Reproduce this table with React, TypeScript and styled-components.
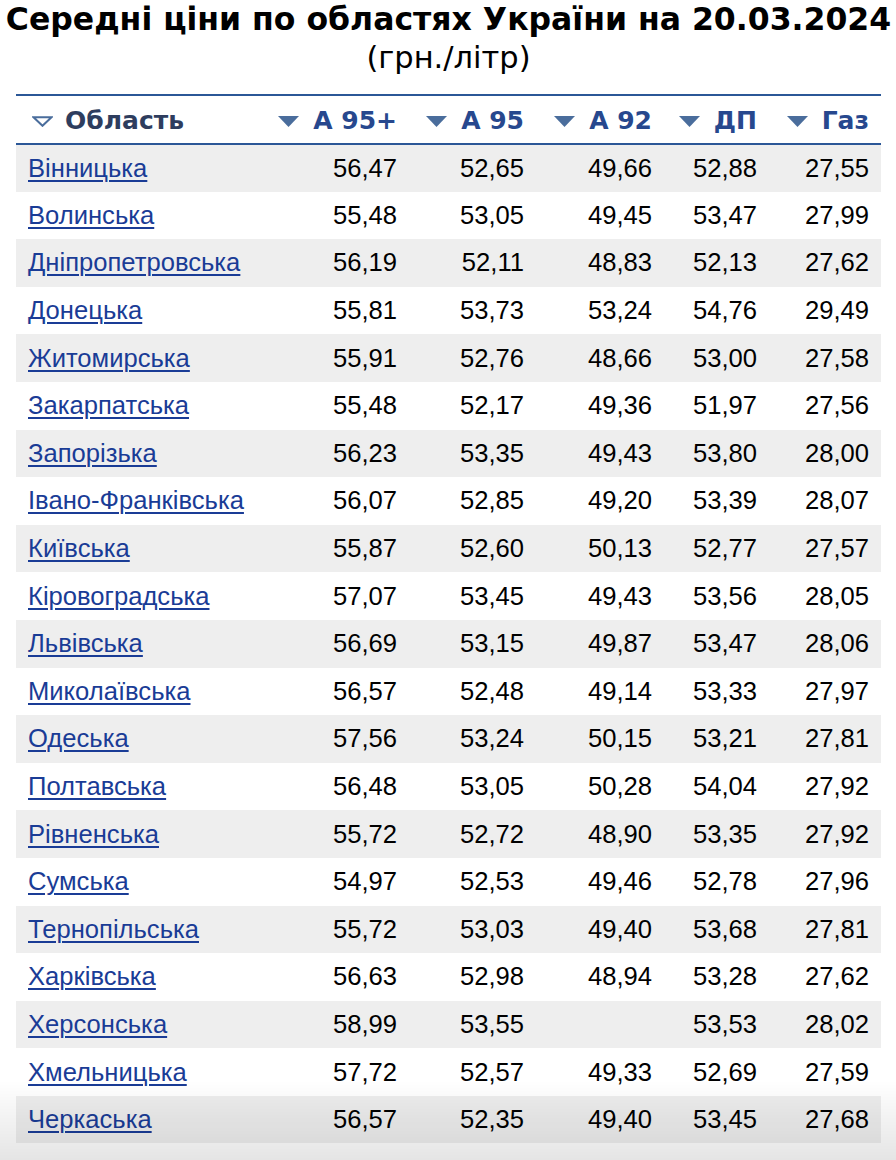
import React from 'react'
import styled, { createGlobalStyle } from 'styled-components'

// ── Data ───────────────────────────────────────────────────────────

type Row = [string, string, string, string, string, string]

const ROWS: Row[] = [
  ['Вінницька', '56,47', '52,65', '49,66', '52,88', '27,55'],
  ['Волинська', '55,48', '53,05', '49,45', '53,47', '27,99'],
  ['Дніпропетровська', '56,19', '52,11', '48,83', '52,13', '27,62'],
  ['Донецька', '55,81', '53,73', '53,24', '54,76', '29,49'],
  ['Житомирська', '55,91', '52,76', '48,66', '53,00', '27,58'],
  ['Закарпатська', '55,48', '52,17', '49,36', '51,97', '27,56'],
  ['Запорізька', '56,23', '53,35', '49,43', '53,80', '28,00'],
  ['Івано-Франківська', '56,07', '52,85', '49,20', '53,39', '28,07'],
  ['Київська', '55,87', '52,60', '50,13', '52,77', '27,57'],
  ['Кіровоградська', '57,07', '53,45', '49,43', '53,56', '28,05'],
  ['Львівська', '56,69', '53,15', '49,87', '53,47', '28,06'],
  ['Миколаївська', '56,57', '52,48', '49,14', '53,33', '27,97'],
  ['Одеська', '57,56', '53,24', '50,15', '53,21', '27,81'],
  ['Полтавська', '56,48', '53,05', '50,28', '54,04', '27,92'],
  ['Рівненська', '55,72', '52,72', '48,90', '53,35', '27,92'],
  ['Сумська', '54,97', '52,53', '49,46', '52,78', '27,96'],
  ['Тернопільська', '55,72', '53,03', '49,40', '53,68', '27,81'],
  ['Харківська', '56,63', '52,98', '48,94', '53,28', '27,62'],
  ['Херсонська', '58,99', '53,55', '', '53,53', '28,02'],
  ['Хмельницька', '57,72', '52,57', '49,33', '52,69', '27,59'],
  ['Черкаська', '56,57', '52,35', '49,40', '53,45', '27,68'],
]

const COLUMNS = [
  { label: 'Область', width: 250, active: true },
  { label: 'А 95+', width: 143 },
  { label: 'А 95', width: 127 },
  { label: 'А 92', width: 128 },
  { label: 'ДП', width: 105 },
  { label: 'Газ', width: 112 },
]

// ── Styled ─────────────────────────────────────────────────────────

const GlobalStyle = createGlobalStyle`
  html, body {
    margin: 0;
    background: #fff;
  }
  body {
    font-family: "Liberation Sans", Arial, sans-serif;
    color: #000;
  }
`

const Page = styled.div`
  padding: 0 15px 0 16px;
`

const Title = styled.h1`
  margin: 0 -16px;
  padding-top: 1px;
  text-align: center;
  white-space: nowrap;
  font-family: "DejaVu Sans", Verdana, sans-serif;
  font-size: 31.5px;
  font-weight: 700;
  line-height: 36px;
`

const Subtitle = styled.div`
  margin-top: 3px;
  text-align: center;
  font-family: "DejaVu Sans", Verdana, sans-serif;
  font-size: 30.5px;
  line-height: 36px;
`

const Table = styled.table`
  width: 865px;
  margin-top: 18px;
  border-collapse: collapse;
  table-layout: fixed;
  border-top: 2px solid #2b5797;
`

const HeadRow = styled.tr`
  height: 49px;
  border-bottom: 2px solid #2b5797;
`

const Th = styled.th<{ $active?: boolean }>`
  padding: 0 12px;
  text-align: ${(p) => (p.$active ? 'left' : 'right')};
  font-family: "DejaVu Sans", Verdana, sans-serif;
  font-size: 25px;
  font-weight: 700;
  color: ${(p) => (p.$active ? '#2e3d5e' : '#27488e')};
  white-space: nowrap;
  vertical-align: middle;
`

const HeadInner = styled.span`
  display: inline-flex;
  align-items: center;
  gap: 12px;
`

const Arrow = styled.svg<{ $shift?: boolean }>`
  width: 21px;
  height: 11px;
  flex: none;
  margin-top: 2px;
  margin-left: ${(p) => (p.$shift ? '4px' : '0')};
  margin-right: ${(p) => (p.$shift ? '0' : '2px')};
`

const BodyRow = styled.tr<{ $striped: boolean }>`
  height: 47.6px;
  background: ${(p) => (p.$striped ? '#eeeeee' : '#ffffff')};
`

const NameCell = styled.td`
  padding: 0 12px;
  font-size: 25.6px;
  vertical-align: middle;
  white-space: nowrap;
`

const RegionLink = styled.a`
  color: #1a3c96;
  text-decoration: underline;
  text-decoration-thickness: 1.5px;
  text-underline-offset: 3px;
`

const NumCell = styled.td`
  padding: 0 12px;
  text-align: right;
  font-size: 25.6px;
  vertical-align: middle;
  color: #000;
`

const BottomFade = styled.div`
  position: fixed;
  left: 0;
  right: 0;
  bottom: 0;
  height: 80px;
  pointer-events: none;
  background: linear-gradient(to bottom, rgba(0, 0, 0, 0), rgba(0, 0, 0, 0.1));
`

// ── Components ─────────────────────────────────────────────────────

function SortArrow({ hollow }: { hollow?: boolean }) {
  return (
    <Arrow viewBox="0 0 21 11" $shift={hollow}>
      {hollow ? (
        <path d="M1.5 1.2 L19.5 1.2 L10.5 9.8 Z" fill="none" stroke="#4a6d9c" strokeWidth="2" />
      ) : (
        <path d="M0 0 L21 0 L10.5 11 Z" fill="#4a6d9c" />
      )}
    </Arrow>
  )
}

export default function App() {
  return (
    <>
      <GlobalStyle />
      <Page>
        <Title>Середні ціни по областях України на 20.03.2024</Title>
        <Subtitle>(грн./літр)</Subtitle>
        <Table>
          <colgroup>
            {COLUMNS.map((c) => (
              <col key={c.label} style={{ width: c.width }} />
            ))}
          </colgroup>
          <thead>
            <HeadRow>
              {COLUMNS.map((c) => (
                <Th key={c.label} $active={c.active}>
                  <HeadInner>
                    <SortArrow hollow={c.active} />
                    {c.label}
                  </HeadInner>
                </Th>
              ))}
            </HeadRow>
          </thead>
          <tbody>
            {ROWS.map((r, i) => (
              <BodyRow key={r[0]} $striped={i % 2 === 0}>
                <NameCell>
                  <RegionLink href="#">{r[0]}</RegionLink>
                </NameCell>
                {r.slice(1).map((v, j) => (
                  <NumCell key={j}>{v}</NumCell>
                ))}
              </BodyRow>
            ))}
          </tbody>
        </Table>
      </Page>
      <BottomFade />
    </>
  )
}
